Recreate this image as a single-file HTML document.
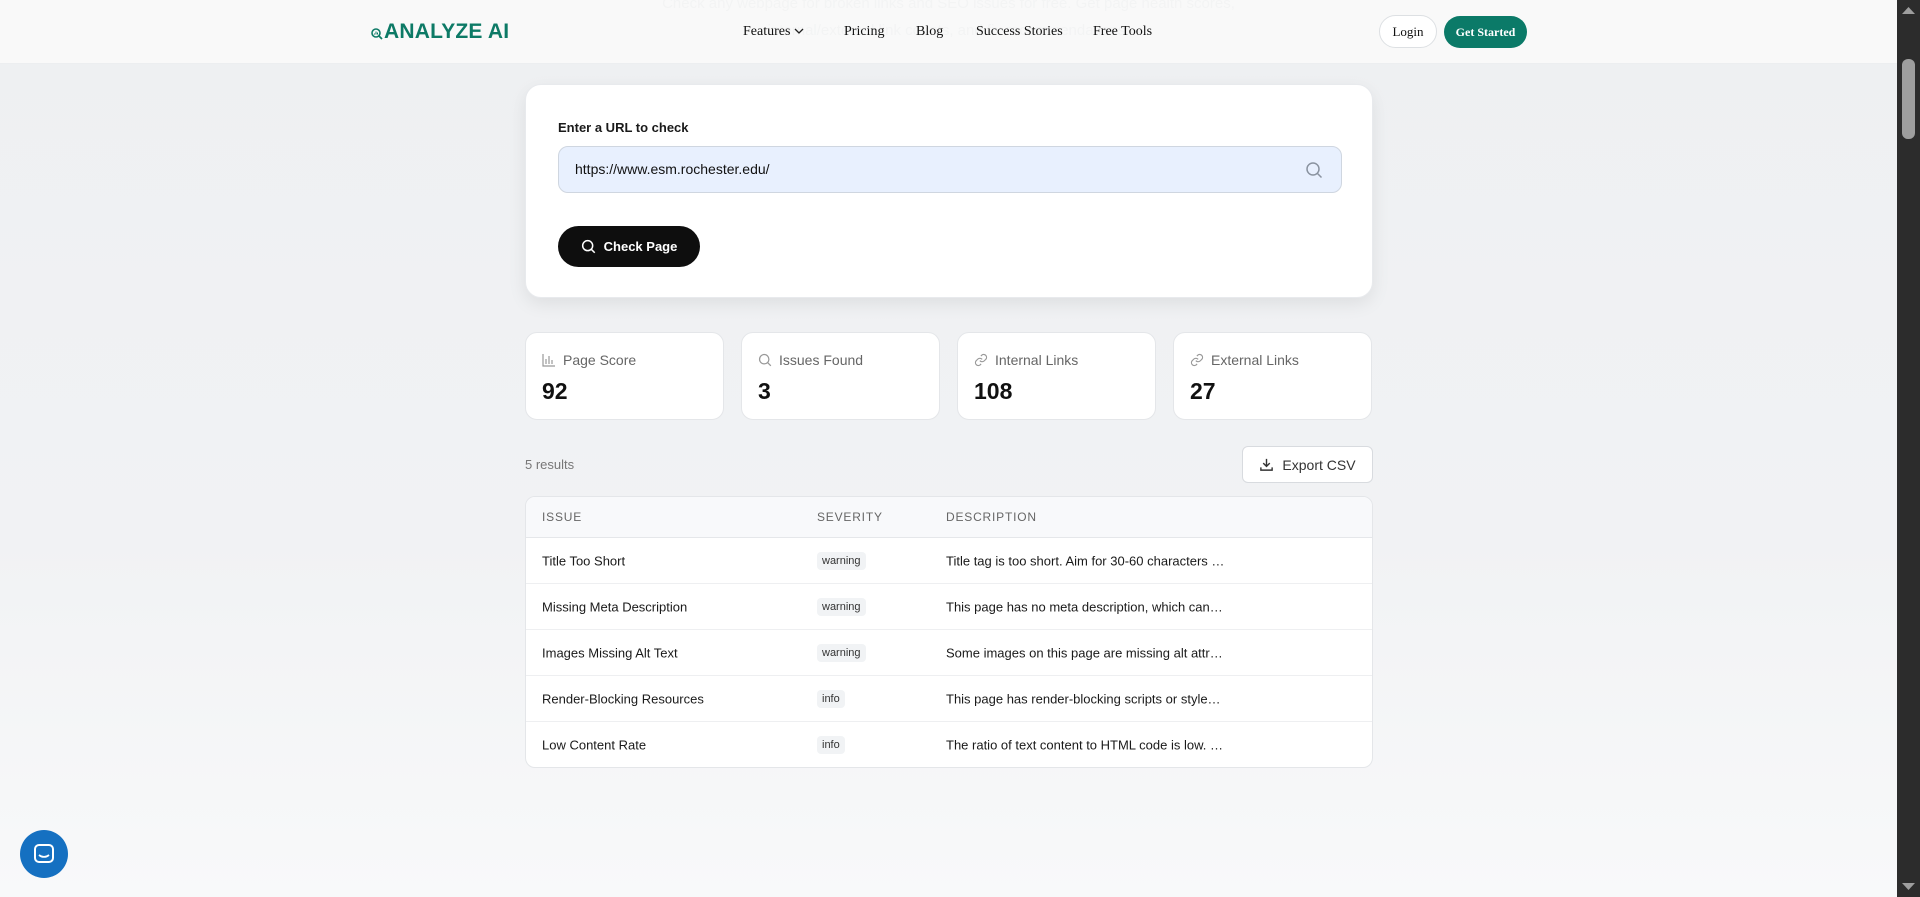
<!DOCTYPE html>
<html><head><meta charset="utf-8"><style>
*{box-sizing:border-box;margin:0;padding:0}
body{width:1920px;height:897px;overflow:hidden;position:relative;font-family:"Liberation Sans",sans-serif;background:linear-gradient(#eef0f2,#f1f2f4 60%,#f8f9fa);color:#111}
.fade{position:absolute;left:0;width:1897px;text-align:center;color:#b9bdc3;font-size:15px}
nav{position:absolute;top:0;left:0;width:1897px;height:64px;background:rgba(249,250,250,0.9);border-bottom:1px solid #eceef0}
.logo{position:absolute;left:371px;top:20px;color:#0d7a66;font-weight:bold;font-size:21px;letter-spacing:0.2px;display:flex;align-items:center}
.links{position:absolute;top:24px;font-family:"Liberation Serif",serif;font-size:14px;color:#111}
.links span{position:absolute;white-space:nowrap}
.login{position:absolute;left:1379px;top:15px;width:58px;height:33px;border:1px solid #dde0e3;border-radius:17px;background:#fff;font-family:"Liberation Serif",serif;font-size:13px;text-align:center;line-height:31px}
.gs{position:absolute;left:1444px;top:16px;width:83px;height:32px;border-radius:16px;background:#0b7a68;color:#fff;font-family:"Liberation Serif",serif;font-weight:bold;font-size:12px;text-align:center;line-height:32px}
.card{position:absolute;left:525px;top:84px;width:848px;height:214px;background:#fff;border-radius:16px;box-shadow:0 6px 18px rgba(0,0,0,0.08);border:1px solid #e8eaed}
.lbl{position:absolute;left:32px;top:35px;font-size:13px;font-weight:bold;color:#1a1a1a}
.inp{position:absolute;left:32px;top:61px;width:784px;height:47px;background:#e8f0fe;border:1px solid #cfd6e0;border-radius:10px;font-size:14px;padding-left:16px;line-height:45px;color:#111}
.btn{position:absolute;left:32px;top:141px;width:142px;height:41px;background:#0e0e0e;border-radius:21px;color:#fff;font-size:13px;font-weight:bold;display:flex;align-items:center;justify-content:center;gap:8px}
.stat{position:absolute;top:332px;width:199px;height:88px;background:#fff;border:1px solid #e4e6e9;border-radius:12px}
.stat .t{position:absolute;left:16px;top:19px;font-size:14px;color:#666;display:flex;align-items:center;gap:7px}
.stat .n{position:absolute;left:16px;top:45px;font-size:23px;font-weight:bold;color:#111}
.res{position:absolute;left:525px;top:457px;font-size:13px;color:#777}
.exp{position:absolute;left:1242px;top:446px;width:131px;height:37px;background:#fff;border:1px solid #d8dbdf;border-radius:6px;font-size:14px;color:#333;display:flex;align-items:center;justify-content:center;gap:8px}
.tbl{position:absolute;left:525px;top:496px;width:848px;height:272px;background:#fff;border:1px solid #e4e6e9;border-radius:10px;overflow:hidden}
.hd{height:41px;background:#f8f9fb;border-bottom:1px solid #e5e7ea;position:relative;font-size:12px;color:#666;letter-spacing:0.8px}
.row{height:46px;border-bottom:1px solid #eeeff1;position:relative;font-size:13px;color:#1a1a1a}
.row:last-child{border-bottom:none}
.c1{position:absolute;left:16px;top:50%;transform:translateY(-50%)}
.c2{position:absolute;left:291px;top:50%;transform:translateY(-50%)}
.c3{position:absolute;left:420px;top:50%;transform:translateY(-50%);white-space:nowrap}
.b{background:#f1f3f5;border-radius:4px;padding:3px 5px;font-size:11px;color:#333}
.chat{position:absolute;left:20px;top:830px;width:48px;height:48px;border-radius:50%;background:#1570c1}
.sb{position:absolute;left:1897px;top:0;width:23px;height:897px;background:#2c2c2c}
.th{position:absolute;left:5px;top:59px;width:13px;height:80px;border-radius:6px;background:#9e9e9e}
</style></head><body>
<div class="fade" style="top:-5px">Check any webpage for broken links and SEO issues for free. Get page health scores,</div>
<div class="fade" style="top:22px">internal/external link counts, and fix recommendations.</div>
<nav>
<div class="logo"><svg width="12" height="12" viewBox="0 0 12 12" style="margin-right:1px;margin-top:4px"><circle cx="5" cy="5" r="4" fill="none" stroke="#0d7a66" stroke-width="1.6"/><path d="M8 8l3 3" stroke="#0d7a66" stroke-width="1.8"/><path d="M3.5 6.5v-1M5 6.5v-3M6.5 6.5v-2" stroke="#0d7a66" stroke-width="1"/></svg>ANALYZE AI</div>
<div class="links"><span style="left:743px">Features <svg width="10" height="8" viewBox="0 0 10 8"><path d="M1 2l4 4 4-4" fill="none" stroke="#222" stroke-width="1.3"/></svg></span><span style="left:844px">Pricing</span><span style="left:916px">Blog</span><span style="left:976px">Success Stories</span><span style="left:1093px">Free Tools</span></div>
<div class="login">Login</div><div class="gs">Get Started</div>
</nav>
<div class="card">
<div class="lbl">Enter a URL to check</div>
<div class="inp">https://www.esm.rochester.edu/<svg style="position:absolute;right:18px;top:14px" width="18" height="18" viewBox="0 0 18 18"><circle cx="8" cy="8" r="6" fill="none" stroke="#8a93a0" stroke-width="1.5"/><path d="M12.5 12.5l4 4" stroke="#8a93a0" stroke-width="1.5"/></svg></div>
<div class="btn"><svg width="15" height="15" viewBox="0 0 18 18"><circle cx="8" cy="8" r="6" fill="none" stroke="#fff" stroke-width="1.8"/><path d="M12.5 12.5l4 4" stroke="#fff" stroke-width="1.8"/></svg>Check Page</div>
</div>
<div class="stat" style="left:525px"><div class="t"><svg width="14" height="14" viewBox="0 0 14 14"><path d="M1 1v12h12M4 11V6M7 11V3M10 11V7" fill="none" stroke="#999" stroke-width="1.2"/></svg>Page Score</div><div class="n">92</div></div>
<div class="stat" style="left:741px"><div class="t"><svg width="14" height="14" viewBox="0 0 18 18"><circle cx="8" cy="8" r="6" fill="none" stroke="#999" stroke-width="1.6"/><path d="M12.5 12.5l4 4" stroke="#999" stroke-width="1.6"/></svg>Issues Found</div><div class="n">3</div></div>
<div class="stat" style="left:957px"><div class="t"><svg width="14" height="14" viewBox="0 0 24 24"><path d="M10 13a5 5 0 0 0 7.5.5l3-3a5 5 0 0 0-7-7l-1.7 1.7M14 11a5 5 0 0 0-7.5-.5l-3 3a5 5 0 0 0 7 7l1.7-1.7" fill="none" stroke="#999" stroke-width="2"/></svg>Internal Links</div><div class="n">108</div></div>
<div class="stat" style="left:1173px"><div class="t"><svg width="14" height="14" viewBox="0 0 24 24"><path d="M10 13a5 5 0 0 0 7.5.5l3-3a5 5 0 0 0-7-7l-1.7 1.7M14 11a5 5 0 0 0-7.5-.5l-3 3a5 5 0 0 0 7 7l1.7-1.7" fill="none" stroke="#999" stroke-width="2"/></svg>External Links</div><div class="n">27</div></div>
<div class="res">5 results</div>
<div class="exp"><svg width="15" height="15" viewBox="0 0 16 16"><path d="M8 2v8M4.5 6.5L8 10l3.5-3.5M2 11v3h12v-3" fill="none" stroke="#333" stroke-width="1.5"/></svg>Export CSV</div>
<div class="tbl">
<div class="hd"><span class="c1">ISSUE</span><span class="c2">SEVERITY</span><span class="c3">DESCRIPTION</span></div>
<div class="row"><span class="c1">Title Too Short</span><span class="c2 b">warning</span><span class="c3">Title tag is too short. Aim for 30-60 characters …</span></div>
<div class="row"><span class="c1">Missing Meta Description</span><span class="c2 b">warning</span><span class="c3">This page has no meta description, which can…</span></div>
<div class="row"><span class="c1">Images Missing Alt Text</span><span class="c2 b">warning</span><span class="c3">Some images on this page are missing alt attr…</span></div>
<div class="row"><span class="c1">Render-Blocking Resources</span><span class="c2 b">info</span><span class="c3">This page has render-blocking scripts or style…</span></div>
<div class="row"><span class="c1">Low Content Rate</span><span class="c2 b">info</span><span class="c3">The ratio of text content to HTML code is low. …</span></div>
</div>
<div class="chat"><svg style="position:absolute;left:13px;top:13px" width="22" height="22" viewBox="0 0 22 22"><rect x="2" y="2" width="18" height="17" rx="4" fill="none" stroke="#fff" stroke-width="2"/><path d="M6 12c3 2.5 7 2.5 10 0" fill="none" stroke="#fff" stroke-width="1.8"/></svg></div>
<div class="sb"><svg style="position:absolute;left:5px;top:6px" width="13" height="9"><path d="M0 8L6.5 1 13 8z" fill="#9e9e9e"/></svg><div class="th"></div><svg style="position:absolute;left:5px;top:882px" width="13" height="9"><path d="M0 1L6.5 8 13 1z" fill="#9e9e9e"/></svg></div>
</body></html>
